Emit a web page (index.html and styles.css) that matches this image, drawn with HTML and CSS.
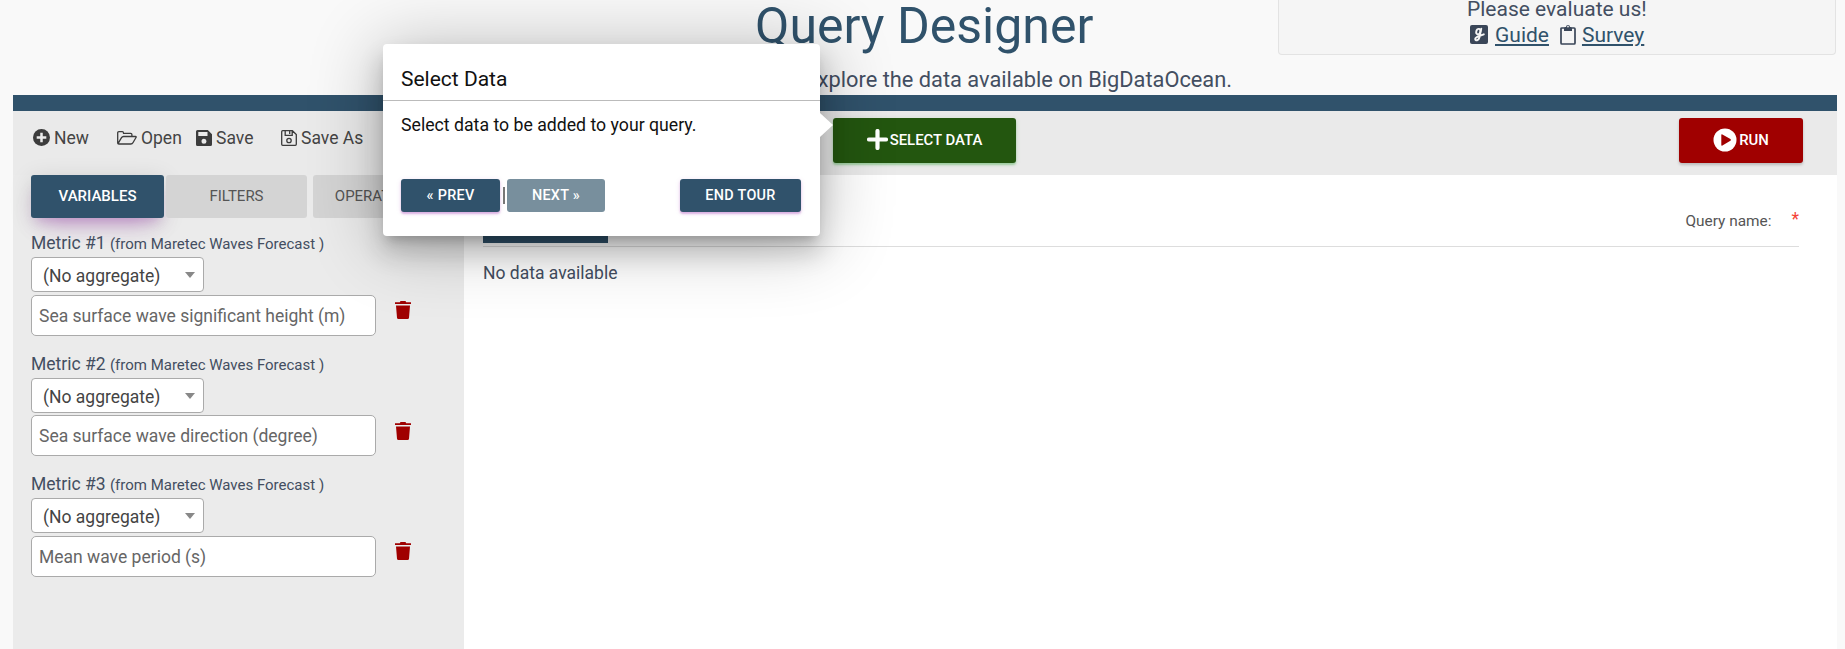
FILE: index.html
```html
<!DOCTYPE html>
<html lang="en">
<head>
<meta charset="utf-8">
<title>Query Designer</title>
<link rel="stylesheet" href="styles.css">
</head>
<body>
<header class="header">
  <div class="heading">
    <h1 class="title">Query Designer</h1>
    <p class="subtitle">Explore the data available on BigDataOcean.</p>
  </div>
  <div class="evaluate">
    <div class="evaluate-text">Please evaluate us!</div>
    <div class="evaluate-links">
      <svg class="ic-guide" viewBox="0 0 18 19"><rect width="18" height="19" rx="2" fill="#3a4658"/><g fill="none" stroke="#f5f5f5" stroke-width="1.9" stroke-linecap="round"><ellipse cx="8.3" cy="6.6" rx="2" ry="2.8" transform="rotate(15 8.3 6.6)"/><path d="M11.3 3.6 9.4 12.5C8.8 15.6 5.3 16.2 5.2 14 5.2 11.8 9 11.2 13.8 9.3"/></g></svg>
      <a class="link">Guide</a>
      <svg class="ic-survey" viewBox="0 0 16 21"><path d="M4.5 4H1.9Q1 4 1 4.900V19q0 1 .9 1h12.200q.9 0 .9-1V4.900Q15 4 14.100 4H11.500" fill="none" stroke="#3a4658" stroke-width="1.700"/><path fill="#3a4658" fill-rule="evenodd" d="M4 7V4q0-1 1-1h1a2 2 0 0 1 4 0h1q1 0 1 1v3zM8 1.700a.9.9 0 1 0 0 1.800.9.9 0 0 0 0-1.800z"/></svg>
      <a class="link">Survey</a>
    </div>
  </div>
</header>

<main class="designer">
  <div class="toolbar">
    <div class="file-actions">
      <span class="action action-new"><svg width="17" height="17" viewBox="0 0 17 17"><circle cx="8.500" cy="8.500" r="8.500" fill="#3c3c3c"/><path d="M8.500 3.700v9.600M3.700 8.500h9.600" stroke="#eaeaea" stroke-width="2.500"/></svg>New</span>
      <span class="action action-open"><svg width="20" height="14" viewBox="0 0 20 14"><path d="M.7 12V1.900Q.7.700 1.900.7h3.400q1.200 0 1.200 1.200v.5h7.200q1.200 0 1.200 1.200v1.600M1 12.700l3.500-6q.7-1.200 2-1.200h12q1.100 0 .5 1l-2.900 5q-.8 1.500-2.300 1.500H1.900Q.7 13 .7 11.800" fill="none" stroke="#3c3c3c" stroke-width="1.300" stroke-linejoin="round"/></svg>Open</span>
      <span class="action action-save"><svg width="16" height="16" viewBox="0 0 16 16"><path fill="#3c3c3c" fill-rule="evenodd" d="M1.500 0h10.300L16 4.200v10.300q0 1.500-1.500 1.500h-13Q0 16 0 14.500v-13Q0 0 1.500 0zM2.300 2v4h9.200V2zM8 8.800a2.500 2.500 0 1 0 0 5 2.500 2.500 0 0 0 0-5z"/></svg>Save</span>
      <span class="action action-saveas"><svg width="16" height="16" viewBox="0 0 16 16"><g fill="none" stroke="#3c3c3c" stroke-width="1.300"><path d="M1.700.7h9.700L15.300 4.600v9.700q0 1-1 1H1.700q-1 0-1-1V1.700q0-1 1-1zM4.200.7v4.600h7V.7M8.700 1v3"/><circle cx="8" cy="10.500" r="2.200"/></g></svg>Save As</span>
    </div>
    <div class="run-actions">
      <div class="btn-main btn-select"><svg width="21" height="21" viewBox="0 0 21 21"><path d="M10.500 2v17M2 10.500h17" stroke="#fff" stroke-width="4.200" stroke-linecap="round"/></svg><span class="btn-label">SELECT DATA</span></div>
      <div class="btn-main btn-run"><svg width="24" height="24" viewBox="0 0 24 24"><circle cx="12" cy="12" r="11.500" fill="#fff"/><path d="M8.300 7.100q0-1.300 1.100-.7l8 4.700q1.200.9 0 1.700l-8 4.700q-1.100.6-1.100-.7z" fill="#a00000"/></svg><span class="btn-label">RUN</span></div>
    </div>
  </div>
  <div class="workspace">
    <aside class="sidebar">
      <nav class="tabs">
        <div class="tab tab-active">VARIABLES</div>
        <div class="tab tab-filters">FILTERS</div>
        <div class="tab tab-ops">OPERATIONS</div>
      </nav>
      <section class="metric">
        <div class="metric-label">Metric #1 <span class="metric-source">(from Maretec Waves Forecast )</span></div>
        <div class="aggregate">(No aggregate)<i class="caret"></i></div>
        <div class="metric-row"><div class="field">Sea surface wave significant height (m)</div><svg class="trash" viewBox="0 0 16 18"><path fill="#a00000" d="M0 1.200h4.800L5.500 0h5l.7 1.200H16V3H0zM1 4.500h14l-1 12.200Q13.800 18 12.600 18H3.400Q2.200 18 2 16.700z"/></svg></div>
      </section>
      <section class="metric metric-tight">
        <div class="metric-label">Metric #2 <span class="metric-source">(from Maretec Waves Forecast )</span></div>
        <div class="aggregate">(No aggregate)<i class="caret"></i></div>
        <div class="metric-row"><div class="field">Sea surface wave direction (degree)</div><svg class="trash" viewBox="0 0 16 18"><path fill="#a00000" d="M0 1.200h4.800L5.500 0h5l.7 1.200H16V3H0zM1 4.500h14l-1 12.200Q13.800 18 12.600 18H3.400Q2.200 18 2 16.700z"/></svg></div>
      </section>
      <section class="metric">
        <div class="metric-label">Metric #3 <span class="metric-source">(from Maretec Waves Forecast )</span></div>
        <div class="aggregate">(No aggregate)<i class="caret"></i></div>
        <div class="metric-row"><div class="field">Mean wave period (s)</div><svg class="trash" viewBox="0 0 16 18"><path fill="#a00000" d="M0 1.200h4.800L5.500 0h5l.7 1.200H16V3H0zM1 4.500h14l-1 12.200Q13.800 18 12.600 18H3.400Q2.200 18 2 16.700z"/></svg></div>
      </section>
    </aside>
    <section class="results">
      <div class="results-head">
        <div class="view-tab"></div>
        <div class="query-name">Query name:<span class="required">*</span></div>
      </div>
      <div class="empty">No data available</div>
    </section>
  </div>
</main>

<div class="tour">
  <div class="tour-title">Select Data</div>
  <div class="tour-text">Select data to be added to your query.</div>
  <div class="tour-nav">
    <div class="tour-btn tour-prev">« PREV</div><span class="tour-sep"></span>
    <div class="tour-btn tour-next">NEXT »</div>
    <div class="tour-btn tour-end">END TOUR</div>
  </div>
</div>
</body>
</html>
```
FILE: styles.css
```css
* { box-sizing: border-box; }
body {
  margin: 0;
  height: 649px;
  overflow: hidden;
  position: relative;
  background: #f9f9f9;
  color: #434e61;
  font-family: Roboto, "Liberation Sans", sans-serif;
  font-size: 17.500px;
}
svg { flex: none; display: block; }

.header { height: 95px; display: flex; justify-content: flex-end; }
.heading { width: 658px; display: flex; flex-direction: column; }
.title { margin: -5px 0 0 135px; font-size: 50px; line-height: 62px; font-weight: 400; color: #30526b; white-space: nowrap; }
.subtitle { margin: 10px 46px 0 0; text-align: right; font-size: 21.800px; line-height: 26px; white-space: nowrap; }
.evaluate {
  width: 558px;
  height: 55px;
  margin-right: 9px;
  border: 1px solid #e3e3e3;
  border-top: 0;
  border-radius: 0 0 4px 4px;
  background: #f5f5f5;
  font-size: 21px;
  line-height: 26px;
}
.evaluate-text { padding-left: 188px; height: 22px; line-height: 18px; }
.evaluate-links { display: flex; align-items: center; padding-left: 191px; }
.ic-guide { width: 18px; height: 19px; margin: -1px 7px 0 0; }
.ic-survey { width: 16px; height: 21px; margin: -2px 6px 0 11px; }
.link { color: #30526b; text-decoration: underline; }

.designer { margin: 0 8px 0 13px; border-top: 16px solid #30526b; }
.toolbar { height: 64px; display: flex; background: #eaeaea; }
.file-actions { width: 820px; display: flex; height: 53px; align-items: center; padding-left: 20px; color: #444; }
.action { display: flex; align-items: center; gap: 4px; white-space: nowrap; }
.action-new { width: 84px; }
.action-open { width: 79px; }
.action-save { width: 85px; }
.run-actions { width: 970px; display: flex; justify-content: space-between; padding-top: 7px; }
.btn-main {
  height: 45px;
  border-radius: 3px;
  display: flex;
  align-items: center;
  justify-content: center;
  gap: 2px;
  padding-bottom: 2px;
  color: #fff;
  font-size: 14.900px;
  font-weight: 500;
}
.btn-select { width: 183px; background: #23560f; box-shadow: 0 2px 2px rgba(76,175,80,.4), 0 1px 5px rgba(76,175,80,.2); }
.btn-run { width: 124px; background: #a00000; box-shadow: 0 2px 3px rgba(0,0,0,.2); }

.workspace { display: flex; height: 474px; }
.sidebar { width: 451px; padding-left: 18px; background: #ebebeb; }
.tabs { display: flex; height: 43px; font-size: 15px; }
.tab { display: flex; align-items: center; justify-content: center; padding-bottom: 1px; border-radius: 3px; background: #d4d4d4; color: #555; }
.tab-active {
  width: 133px;
  margin-right: 2px;
  background: #30526b;
  color: #fff;
  font-weight: 500;
  box-shadow: 0 14px 26px -12px rgba(156,39,176,.42), 0 4px 23px 0 rgba(0,0,0,.12), 0 8px 10px -5px rgba(156,39,176,.2);
}
.tab-filters { width: 141px; margin-right: 6px; }
.tab-ops { width: 133px; }
.metric { height: 121px; }
.metric-tight { height: 120px; }
.metric-label { padding-top: 13px; height: 39px; line-height: 24px; white-space: nowrap; }
.metric-source { font-size: 15px; }
.aggregate {
  width: 173px;
  height: 35px;
  display: flex;
  align-items: center;
  justify-content: space-between;
  padding: 2px 8px 0 11px;
  border: 1px solid #aaa;
  border-radius: 4px;
  background: #fff;
  color: #444;
}
.caret { border: 5px solid transparent; border-top: 6px solid #888; border-bottom: 0; margin-top: -1px; }
.metric-row { display: flex; margin-top: 3px; }
.metric-tight .metric-row { margin-top: 2px; }
.field { width: 345px; height: 41px; padding-left: 7px; border: 1px solid #aaa; border-radius: 5px; background: #fff; color: #666; line-height: 41px; }
.trash { width: 16px; height: 18px; margin: 6px 0 0 19px; }
.metric-tight .trash { margin-top: 7px; }

.results { width: 1373px; background: #fff; padding-left: 19px; }
.results-head { width: 1316px; height: 72px; border-bottom: 1px solid #ddd; display: flex; justify-content: space-between; }
.view-tab { width: 125px; height: 42px; margin-top: 26px; background: #30526b; }
.query-name { display: flex; margin-top: 35px; font-size: 15.400px; line-height: 22px; color: #555; }
.required { margin: -2px 0 0 20px; font-size: 17.500px; color: #f44336; }
.empty { margin-top: 14px; line-height: 24px; }

.tour {
  position: absolute;
  left: 383px;
  top: 44px;
  width: 437px;
  height: 192px;
  border-radius: 4px;
  background: #fff;
  color: #111;
  box-shadow: 0 16px 24px 2px rgba(0,0,0,.16), 0 6px 70px 5px rgba(0,0,0,.24), 0 8px 10px -5px rgba(0,0,0,.2);
}
.tour::after {
  content: "";
  position: absolute;
  left: 437px;
  top: 69px;
  border: 12px solid transparent;
  border-left: 13px solid #fff;
  border-right: 0;
}
.tour-title { height: 57px; padding: 22px 18px 0; border-bottom: 1px solid #bbb; font-size: 21px; line-height: 26px; }
.tour-text { padding: 12px 18px 0; height: 78px; font-size: 17.700px; line-height: 24px; }
.tour-nav { display: flex; padding: 0 19px 0 18px; }
.tour-btn { height: 33px; border-radius: 3px; background: #30526b; color: #fff; font-size: 14.400px; font-weight: 500; letter-spacing: .3px; display: flex; align-items: center; justify-content: center; box-shadow: 0 2px 2px rgba(156,39,176,.3), 0 1px 5px rgba(156,39,176,.15); }
.tour-prev { width: 99px; }
.tour-next { width: 98px; background: #788f9d; box-shadow: none; }
.tour-end { width: 121px; margin-left: auto; }
.tour-sep { width: 2px; height: 17px; margin: 8px 2px 0 3px; background: #777; }
```
